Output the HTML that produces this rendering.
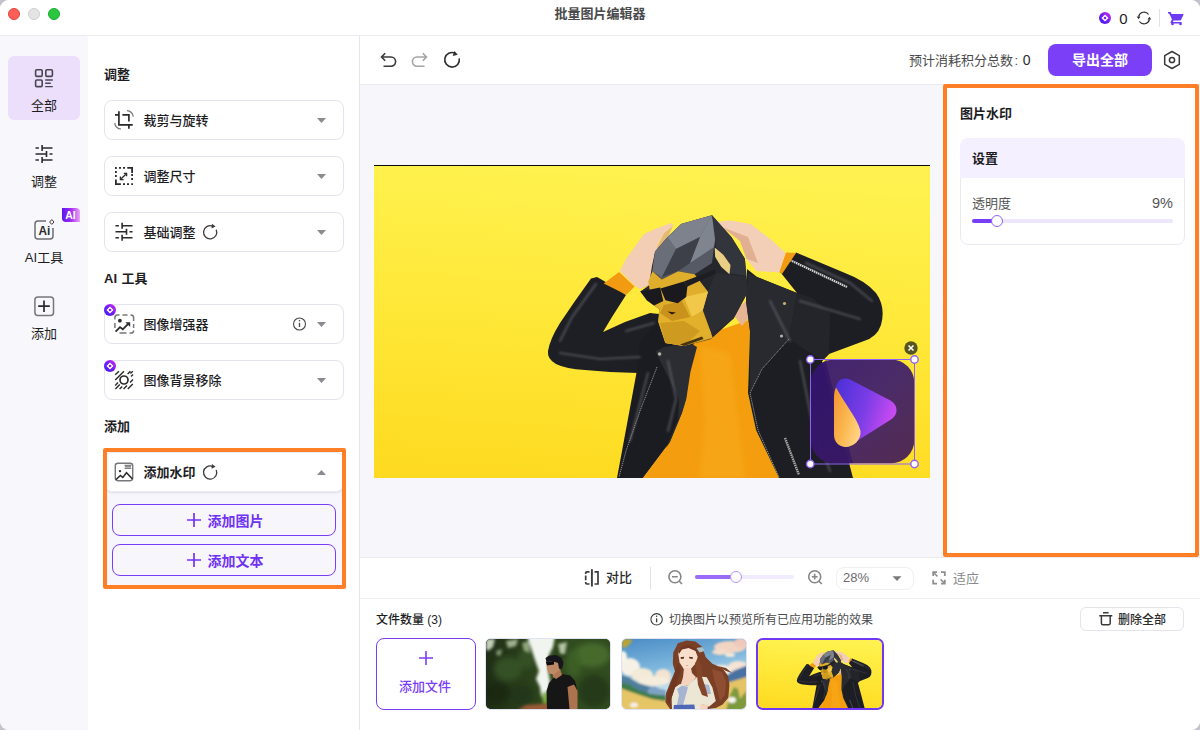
<!DOCTYPE html>
<html lang="zh-CN">
<head>
<meta charset="utf-8">
<title>批量图片编辑器</title>
<style>
*{box-sizing:border-box;margin:0;padding:0}
html,body{width:1200px;height:730px;overflow:hidden;background:#c4c3cb}
body{font-family:"Liberation Sans","Noto Sans CJK SC",sans-serif;color:#1d1d1f;font-size:13px;position:relative}
.abs{position:absolute}
#win{position:absolute;left:0;top:0;width:1200px;height:730px;background:#fff;border-radius:9px;overflow:hidden}
#titlebar{position:absolute;left:0;top:0;width:1200px;height:36px;background:#fff;border-bottom:1px solid #ebebef}
.tl{position:absolute;top:8px;width:12px;height:12px;border-radius:50%}
#title{position:absolute;left:0;width:1200px;top:5px;text-align:center;font-size:13px;font-weight:700;color:#4a4a4c;line-height:18px;letter-spacing:0}
#nav{position:absolute;left:0;top:36px;width:88px;height:694px;background:#f8f8fc;border-radius:0 3px 0 0}
.navitem{position:absolute;left:8px;width:72px;height:64px;border-radius:6px;text-align:center}
.navitem .lbl{position:absolute;left:0;width:72px;top:40.6px;font-size:13px;line-height:18px;color:#1d1d1f}
.navitem svg{position:absolute;left:24px;top:9px}
#panel{position:absolute;left:88px;top:36px;width:272px;height:694px;background:#fff;border-right:1px solid #e6e6ec}
.sec{position:absolute;left:16px;font-size:13px;font-weight:700;line-height:18px;color:#1d1d1f}
.card{position:absolute;left:16px;width:240px;height:40px;border:1px solid #e4e4ee;border-radius:8px;background:#fff}
.card .t{position:absolute;left:38.5px;top:10.8px;font-size:13px;line-height:18px;font-weight:500;color:#1d1d1f}
.card .ic{position:absolute;left:9px;top:9px}
.card .arr{position:absolute;left:213px;top:17px;width:0;height:0;border-left:4.5px solid transparent;border-right:4.5px solid transparent;border-top:5px solid #8a8a90}
#toolbar{position:absolute;left:360px;top:36px;width:840px;height:49px;background:#fff;border-bottom:1px solid #e9e9ef}
#canvas{position:absolute;left:360px;top:85px;width:840px;height:473px;background:#f7f6fb}
#zoombar{position:absolute;left:360px;top:557px;width:840px;height:42px;background:#fff;border-top:1px solid #e9e9ef;border-bottom:1px solid #ececf1}
#strip{position:absolute;left:360px;top:599px;width:840px;height:131px;background:#fff}

.g{stroke:#2b2b2d;fill:none;stroke-width:1.5}
.badge{position:absolute;left:-1px;top:-1px;width:12px;height:12px}
.btn{position:absolute;left:24px;width:224px;height:32px;border:1px solid #7a3df7;border-radius:8px;background:#f8f6fd;color:#6f33f3;font-size:14px;font-weight:700;line-height:20px}
.btn span{position:absolute;left:94.5px;top:6px;white-space:nowrap}
.btn svg{position:absolute;left:74px;top:8px}
.thumb{position:absolute;top:39px;width:126px;height:71px;border-radius:6px;overflow:hidden;border:1px solid #e2e2f2;background:#ccc}
.thumb svg{position:absolute;left:0;top:0;width:100%;height:100%;display:block}
</style>
</head>
<body>
<div id="win">
<!--PHOTO--><svg class="abs" style="left:0;top:0" width="0" height="0"><defs>
<linearGradient id="pbg" x1=".56" y1="0" x2=".44" y2="1"><stop offset="0" stop-color="#fff250"/><stop offset=".45" stop-color="#ffe93a"/><stop offset="1" stop-color="#fedb22"/></linearGradient>
<linearGradient id="lea" x1="0" y1="0" x2="1" y2="1"><stop offset="0" stop-color="#34363c"/><stop offset="1" stop-color="#15161a"/></linearGradient>
<filter id="bl1"><feGaussianBlur stdDeviation="1.2"/></filter>
<filter id="bl2"><feGaussianBlur stdDeviation="2.5"/></filter>
<symbol id="ph" viewBox="374 165 556 312" preserveAspectRatio="xMidYMid slice">
<rect x="374" y="165" width="556" height="312" fill="url(#pbg)"/>
<!-- left sleeve -->
<path d="M591 277.500L597 276L604 280L626 294L612 316L603 331L625 321L650 312L668 314L662 372L638 372L610 371L585 369Q566 368 556 363Q547 358 548 350Q550 338 560 322L575 300Z" fill="#1e1f24"/>
<!-- left body -->
<path d="M640 340L665 312L700 338L697 346L690 371L686 398L682 412L670 441L643 477L617 477L637 369Z" fill="#1b1c21"/>
<!-- sweater -->
<path d="M694 338L752 318L750 330L748 392L756 429L779 477L643 477L670 441L682 412L686 398L690 371Z" fill="#f49d0e"/>
<path d="M700 345L730 352L738 420L745 477L700 477L705 420Z" fill="#f8ab1c" opacity=".6" filter="url(#bl2)"/>
<!-- neck -->
<path d="M732 312L753 294L755 310L742 325Z" fill="#e6b592"/>
<!-- right jacket -->
<path d="M747 268L757 276L797 292L781 272L796 251.500L845 272Q866 280 876 292Q886 306 881 324Q877 336 864 340L829 353L822 360L838 420L853 477L779 477L756 429L748 392L750 330L746 300Z" fill="#1d1e23"/>
<!-- lapels -->
<path d="M655.5 350.600L664 346L690 342L697 346L690.4 371L686.3 398L682 412L670 441L660 456L666 447L678 418.400L679 398Z" fill="#2c2d33"/>
<path d="M748 272L757 276L797 292L789 338L762 368L750 392L750 330L746 300Z" fill="#292a30"/>
<path d="M797 292L812 297L830 312L829 353L822 360L800 345L789 338Z" fill="#24252b"/>
<path d="M640 288L650 282L652 270L657 246L664 232L673 225L668 236L661 250L658 266L656 282Z" fill="#d9a788" opacity=".75"/>
<!-- leather highlights -->
<g filter="url(#bl1)" opacity=".55" fill="none" stroke="#6d7078" stroke-width="2.2" stroke-linecap="round">
<path d="M596 283L572 316L560 340"/><path d="M560 352L600 358L640 356"/><path d="M626 330L654 322"/>
<path d="M648 372L630 440"/><path d="M668 360L676 398L668 430"/>
<path d="M806 262L850 282L872 300"/><path d="M800 300L860 318"/><path d="M770 300L790 340"/><path d="M800 360L812 420L830 470"/>
</g>
<!-- zippers -->
<g fill="none" stroke="#a5a5a0" stroke-width="1" stroke-dasharray="1.2 .8" opacity=".85"><path d="M657 366L640 410L626 450L619 476"/><path d="M789 338L762 368L750 392L758 429L779 476"/></g>
<path d="M785 437L799 474" stroke="#a9a9a6" stroke-width="2.4" stroke-dasharray="1.5 .7"/>
<path d="M790 259L847 286" stroke="#d4d4d4" stroke-width="2.2" stroke-dasharray="1.6 .6"/>
<circle cx="659.6" cy="353" r="1.8" fill="#b5b0a8"/><circle cx="781.5" cy="335" r="1.6" fill="#b5b0a8"/><circle cx="784.5" cy="302.5" r="1.6" fill="#c9b07a"/>
<!-- cuffs -->
<path d="M603.7 282.400L619.1 271.100L634.6 285.500L626.3 293.700Z" fill="#f29a12"/>
<path d="M779 271L786 251.500L796 252L782 273Z" fill="#f29a12"/>
<!-- hands -->
<path d="M620 270L626 258L636 244L644 233L655 228L666 224L672 222L673 225L664 232L657 245L660 262L652 282L640 288L635 285Z" fill="#f3cdb4"/>
<path d="M716 221L730 219.500L750.6 223L769 237L785.5 251.700L779.3 271.200L756.7 270.200L746.4 257.800L740 240L725 228Z" fill="#f4cfb7"/>
<path d="M722 226L748 236L758 262L746.4 257.800L740 240Z" fill="#d9a282" opacity=".7"/>
<!-- mask: black base -->
<path d="M712 214.300L723.3 227L731.6 236.200L744.9 257.800L748 290.700L733.6 317.400L711 338L683.9 345.100L665.4 342L658.2 320.400L659.2 308.100L652 303L640.3 290.600L648.9 284.500L652 264.900L655.1 250.600L667.4 236.200L681.2 222.900Z" fill="#26272c"/>
<!-- grey top -->
<path d="M655.1 250.600L667.4 236.200L681.2 222.900L712 214.300L716 232L714 246L712 262L694.6 273.200L678.1 270.200L661.7 278.400L652.4 270.200Z" fill="#565a64"/>
<path d="M667.4 236.200L681.2 222.900L712 214.300L700 236L676 248Z" fill="#7d828c"/>
<path d="M655.1 250.600L667.4 236.200L676 248L662 276L652.4 270.200Z" fill="#6a6e78"/>
<path d="M700 236L712 214.300L716 232L714 246L690 262Z" fill="#8a8f99" opacity=".8"/>
<path d="M676 248L700 236L690 262L678.1 270.200L662 276Z" fill="#3d4048"/>
<!-- right dark facets -->
<path d="M712 214.300L723.3 227L731.6 236.200L744.9 257.800L746 275L730 272L716 246Z" fill="#33353c"/>
<path d="M708 290.700L716 272L746 276L748 290.700L733.6 317.400L711 334L702.8 309.200Z" fill="#2c2d33"/>
<!-- ear -->
<path d="M714.7 246.500L723.3 253.700L730.5 264L729.5 273.200L721.3 266L715.1 255.800Z" fill="#e9cf86"/>
<!-- yellow face -->
<path d="M648.3 280.400L652.4 270.200L661.7 278.400L678.1 270.200L694.6 273.200L708 290.700L702.8 309.200L711 331.800L712.7 336.900L683.9 345.100L665.4 342L658.2 320.400L659.2 308.100L652 303Z" fill="#dfae2c"/>
<path d="M684 296L708 290.700L702.8 309.200L692 316Z" fill="#f1c84a"/>
<path d="M660 310L690 316L702 312L711 332L684 345L665.4 342L658.2 320.400Z" fill="#e3b02c"/>
<path d="M660 322L684 320L700 330L684 345L665.4 342Z" fill="#cf9a20"/>
<path d="M664 304L682 300L690 316L672 320L660 312Z" fill="#c8921c"/>
<path d="M680 343.500L702 335.500L703.5 338L684 345.100Z" fill="#2e2009" opacity=".85"/>
<!-- glasses -->
<path d="M640.3 290.600L660.2 286.500L663.3 299.900L654.1 304.600L646.9 299.500Z" fill="#1a1a1e"/>
<path d="M660.5 287.600L683.9 280.600L687.4 285.500L686.2 296L677.7 302.200L665.4 299.200Z" fill="#1a1a1e"/>
<path d="M683.9 280.600L715.1 268.600L716.1 272.200L687 285.800Z" fill="#1d1d22"/>
<path d="M667.5 310.500L676 311.500L672 313.500Z" fill="#2a1c08"/>
</symbol>
</defs></svg>
<!--/PHOTO-->
<div id="titlebar">
  <div class="tl" style="left:8px;background:#fe5f57;border:.5px solid #e2443d"></div>
  <div class="tl" style="left:28px;background:#e4e4e4;border:.5px solid #cfcfcf"></div>
  <div class="tl" style="left:48px;background:#29c740;border:.5px solid #1eab32"></div>
  <div id="title">批量图片编辑器</div>
  <div class="abs" style="left:1119.3px;top:9.5px;font-size:15px;line-height:18px;color:#1d1d1f">0</div>
</div>
<div id="nav">
  <div class="navitem" style="top:20px;background:#ecdffc"><div class="lbl">全部</div></div>
  <div class="navitem" style="top:96px"><div class="lbl">调整</div></div>
  <div class="navitem" style="top:172px"><div class="lbl">AI工具</div></div>
  <div class="navitem" style="top:248px"><div class="lbl">添加</div></div>
</div>
<div id="panel">
  <div class="sec" style="top:30px">调整</div>
  <div class="card" style="top:64px"><div class="t">裁剪与旋转</div></div>
  <div class="card" style="top:120px"><div class="t">调整尺寸</div></div>
  <div class="card" style="top:176px"><div class="t">基础调整</div></div>
  <div class="sec" style="top:233.5px;word-spacing:1px">AI 工具</div>
  <div class="card" style="top:268px"><div class="t">图像增强器</div></div>
  <div class="card" style="top:324px"><div class="t">图像背景移除</div></div>
  <div class="sec" style="top:382px">添加</div>

  <div class="abs" style="left:16px;top:416px;width:240px;height:136px;border-radius:8px;background:#f7f6fc"></div>
  <div class="card" style="top:416px;box-shadow:0 1px 2px rgba(60,50,120,.12);border-color:#ececf4"><div class="t" style="font-weight:700">添加水印</div></div>
  <div class="btn" style="top:468px"><svg width="14" height="14" viewBox="0 0 14 14"><path d="M0 7h14M7 0v14" stroke="#6f33f3" stroke-width="1.7"/></svg><span>添加图片</span></div>
  <div class="btn" style="top:508px"><svg width="14" height="14" viewBox="0 0 14 14"><path d="M0 7h14M7 0v14" stroke="#6f33f3" stroke-width="1.7"/></svg><span>添加文本</span></div>
  <div class="abs" style="left:15px;top:412px;width:243px;height:141px;border:4px solid #ff7f27;border-radius:2px"></div>
</div>
<div id="toolbar">
  <div class="abs" style="left:549px;top:15px;font-size:13px;line-height:18px;color:#4a4a4c;white-space:nowrap">预计消耗积分总数<span style="margin-left:1.5px">:</span><span style="margin-left:4.5px;color:#2b2b2d;font-size:14px">0</span></div>
  <div class="abs" style="left:688px;top:8px;width:104px;height:32px;border-radius:8px;background:#7a3ff7;color:#fff;font-size:14px;font-weight:700;line-height:32px;text-align:center">导出全部</div>
</div>
<div id="canvas">
  <div class="abs" style="left:14px;top:79.5px;width:556px;height:1.5px;background:#0a0a0a"></div>
  <div id="photo" class="abs" style="left:14px;top:81px;width:556px;height:311.5px;background:#fde53a;overflow:hidden"><svg class="abs" style="left:0;top:0" width="556" height="312"><use href="#ph" width="556" height="312"/></svg></div>
  <svg id="wm" class="abs" style="left:430px;top:250px;pointer-events:none" width="140" height="140" viewBox="790 335 140 140">
<defs>
<linearGradient id="wmb" x1="0" y1="0" x2="1" y2="1"><stop offset="0" stop-color="#3a1a72"/><stop offset=".5" stop-color="#44246a"/><stop offset="1" stop-color="#4c2452"/></linearGradient>
<linearGradient id="wmp" x1="0" y1="0" x2="1" y2=".35"><stop offset="0" stop-color="#4a2fd6"/><stop offset=".55" stop-color="#7a3de6"/><stop offset="1" stop-color="#c84af0"/></linearGradient>
<linearGradient id="wmo" x1="0" y1=".2" x2="1" y2=".8"><stop offset="0" stop-color="#f59a35"/><stop offset=".5" stop-color="#fbb850"/><stop offset="1" stop-color="#ffd68a"/></linearGradient>
</defs>
<rect x="811" y="359.6" width="103.3" height="103.6" rx="23" fill="url(#wmb)" opacity=".96"/>
<path d="M811 382a22.4 22.4 0 0 1 22.4-22.400L825 359.600L853 463.200L833.4 463.200a22.4 22.4 0 0 1-22.4-22.400Z" fill="#2c0f66" opacity=".55"/>
<path d="M836 387.500C837 380 843.5 376.8 850 379.500L890.5 400.500C898.5 405 898.5 415 891 419.500L853 443.500C848 446.5 847 447.2 843 446.800C846 440 848 420 836 387.500Z" fill="url(#wmp)"/>
<path d="M836 387.500C849 410 858 420 860.5 431C861.5 441 852 447.5 845 447C838.5 446.5 834 441.5 834 435L834 398C834 393 834.8 390 836 387.500Z" fill="url(#wmo)"/>
<rect x="810.5" y="359.5" width="104" height="104.5" fill="none" stroke="#8e62f6" stroke-width="1"/>
<g fill="#fff" stroke="#8e62f6" stroke-width="1.4"><circle cx="810.3" cy="359.5" r="3.7"/><circle cx="914.5" cy="359.5" r="3.7"/><circle cx="810.3" cy="464" r="3.7"/><circle cx="914.5" cy="464" r="3.7"/></g>
<circle cx="911" cy="348" r="6.7" fill="#57551f"/><path d="M908.5 345.500l5 5M913.5 345.500l-5 5" stroke="#fff" stroke-width="1.5"/>
</svg>
  <div id="rp" class="abs" style="left:587px;top:3px;width:248px;height:466px;background:#fff">
    <div class="abs" style="left:13px;top:16.5px;font-size:13px;font-weight:700;line-height:18px">图片水印</div>
    <div class="abs" style="left:13px;top:50px;width:225px;height:107px">
      <div class="abs" style="left:0;top:39px;width:225px;height:68px;border:1px solid #e9e9f1;border-radius:0 0 8px 8px;background:#fff"></div>
      <div class="abs" style="left:0;top:0;width:225px;height:40px;background:#f5f0ff;border-radius:8px 8px 0 0"></div>
      <div class="abs" style="left:12px;top:12px;font-size:13px;font-weight:700;line-height:18px">设置</div>
      <div class="abs" style="left:12px;top:56.5px;font-size:13px;line-height:18px;color:#555558">透明度</div>
      <div class="abs" style="right:12px;top:56px;font-size:14.5px;line-height:18px;color:#555558">9%</div>
      <div class="abs" style="left:12px;top:81px;width:201px;height:4px;border-radius:2px;background:#ede6fd"></div>
      <div class="abs" style="left:12px;top:81px;width:24px;height:4px;border-radius:2px;background:#7a3df7"></div>
      <div class="abs" style="left:30.5px;top:77px;width:12px;height:12px;border-radius:50%;background:#fff;border:1.5px solid #8e62f6"></div>
    </div>
  </div>
  <div class="abs" style="left:583px;top:-1px;width:255.5px;height:473px;border:4px solid #ff7f27;border-radius:2px"></div>
</div>
<div id="zoombar">
  <div class="abs" style="left:246px;top:11px;font-size:13px;font-weight:500;line-height:18px;color:#2b2b2d">对比</div>
  <div class="abs" style="left:334.5px;top:16.7px;width:99px;height:4.4px;border-radius:2.2px;background:#f0ebfe"></div>
  <div class="abs" style="left:334.5px;top:16.7px;width:40px;height:4.4px;border-radius:2.2px;background:#9a6cf8"></div>
  <div class="abs" style="left:369.5px;top:12.9px;width:12px;height:12px;border-radius:50%;background:#fff;border:1.5px solid #b095fa"></div>
  <div class="abs" style="left:476px;top:8.5px;width:78px;height:23px;border-radius:8px;border:1px solid #efeff4;background:#fff"></div>
  <div class="abs" style="left:483px;top:11px;font-size:13px;line-height:18px;color:#6a6a6e">28%</div>
  <div class="abs" style="left:593px;top:12px;font-size:13px;line-height:18px;color:#8a8a8e">适应</div>
</div>
<div id="strip">
  <div class="abs" style="left:16px;top:12px;font-size:12px;font-weight:500;line-height:18px;color:#1d1d1f;white-space:nowrap">文件数量 (3)</div>
  <div class="abs" style="left:309px;top:12px;font-size:12px;line-height:18px;color:#4a4a4c;white-space:nowrap">切换图片以预览所有已应用功能的效果</div>
  <div class="abs" style="left:720px;top:8px;width:104px;height:24px;border:1px solid #e4e4ea;border-radius:6px;background:#fff"></div>
  <div class="abs" style="left:758px;top:11.5px;font-size:12px;font-weight:500;line-height:18px;color:#2b2b2d;white-space:nowrap">删除全部</div>
  <div class="abs" style="left:16px;top:39px;width:100px;height:72px;border:1px solid #7a3df7;border-radius:8px;background:#fff">
    <svg class="abs" style="left:42px;top:12px" width="14" height="14" viewBox="0 0 14 14"><path d="M0 7h14M7 0v14" stroke="#7a3df7" stroke-width="1.6"/></svg>
    <div class="abs" style="left:-1px;top:39px;width:98px;text-align:center;font-size:13px;font-weight:500;line-height:18px;color:#7a3df7">添加文件</div>
  </div>
  <div class="thumb" id="t1" style="left:125px;height:72px"><svg viewBox="0 0 124 70" preserveAspectRatio="none">
<defs><filter id="f1"><feGaussianBlur stdDeviation="1.5"/></filter><filter id="f1b"><feGaussianBlur stdDeviation=".5"/></filter><filter id="f1c"><feGaussianBlur stdDeviation="2.6"/></filter>
<linearGradient id="t1l" x1="0" y1="0" x2="1" y2="0"><stop offset="0" stop-color="#1f2e17"/><stop offset="1" stop-color="#2e461d"/></linearGradient></defs>
<rect width="124" height="70" fill="#2e471d"/>
<rect width="56" height="70" fill="url(#t1l)"/>
<rect x="62" width="62" height="70" fill="#314c20"/>
<g filter="url(#f1c)">
<ellipse cx="22" cy="30" rx="14" ry="12" fill="#3a5627" opacity=".8"/><ellipse cx="40" cy="20" rx="8" ry="10" fill="#385424" opacity=".8"/>
<ellipse cx="10" cy="54" rx="14" ry="12" fill="#1a2712" opacity=".8"/><ellipse cx="36" cy="56" rx="12" ry="10" fill="#223618" opacity=".8"/>
<ellipse cx="106" cy="16" rx="18" ry="12" fill="#4b7030" opacity=".85"/><ellipse cx="88" cy="24" rx="8" ry="14" fill="#3d6127" opacity=".8"/>
<ellipse cx="108" cy="52" rx="16" ry="16" fill="#223819" opacity=".9"/><ellipse cx="75" cy="12" rx="5" ry="10" fill="#263a19"/>
</g>
<g filter="url(#f1)">
<path d="M41 -3L69 -3L67 8L63 16L62 30L64 42L63 56L58 62L55 56L54 48L50 40L53 32L50 24L46 12Z" fill="#f1f5ef"/>
<path d="M0 0L9 0L7 8L2 12L0 10Z" fill="#c5d0ba"/><path d="M20 2L32 0L30 7L22 9Z" fill="#9fb090"/><path d="M10 12L16 10L15 16L11 17Z" fill="#7f9670"/><path d="M72 5L81 3L79 15L74 15Z" fill="#b3c4a2"/><path d="M36 4L43 2L44 14L38 12Z" fill="#8fa57c"/>
<path d="M56 54L62 52L62 64L57 64Z" fill="#7fae3e"/>
<path d="M30 72L40 66L63 64.500L63 72Z" fill="#9a5a34"/>
</g>
<g filter="url(#f1b)">
<path d="M61 70L60.5 52L63 44L68 38.500L76 35L84 36.500L89 42L91 50L91 70Z" fill="#141416"/>
<path d="M66 32L74 30L76 36L70 40L67 38Z" fill="#b07a56"/>
<path d="M60.5 24L66 21L73 23L73.5 31L68 35.500L63 34.500L61 30Z" fill="#c08a66"/>
<path d="M59.5 19L63 16.500L70 16L75.5 19L77.5 24L76 30L73 29.500L72 24L66 22L60.5 23Z" fill="#19191b"/>
<path d="M59.8 22.800L68 22L68 25.600L61 26.500Z" fill="#0e0e10"/>
<path d="M81.5 48L88 45.500L91.5 52L91.5 70L83.5 70Z" fill="#ad7350"/>
</g>
</svg></div>
  <div class="thumb" id="t2" style="left:261px;height:72px"><svg viewBox="0 0 124 70" preserveAspectRatio="none">
<defs><filter id="f2"><feGaussianBlur stdDeviation="1.1"/></filter><filter id="f2b"><feGaussianBlur stdDeviation=".45"/></filter>
<linearGradient id="t2s" x1="0" y1="0" x2=".3" y2="1"><stop offset="0" stop-color="#4a8cc6"/><stop offset=".45" stop-color="#7db6dc"/><stop offset=".75" stop-color="#c2e0ee"/></linearGradient></defs>
<rect width="124" height="70" fill="url(#t2s)"/>
<g filter="url(#f2)">
<ellipse cx="8" cy="28" rx="10" ry="9" fill="#f6f1e6"/><ellipse cx="20" cy="36" rx="11" ry="7" fill="#f3ead8"/><ellipse cx="41" cy="37" rx="8" ry="7" fill="#f3e3d2"/><ellipse cx="32" cy="42" rx="16" ry="5" fill="#f5ecdc"/><ellipse cx="1" cy="18" rx="4" ry="6" fill="#f8f4ea"/>
<ellipse cx="108" cy="8" rx="16" ry="6" fill="#f2d4c2"/><ellipse cx="98" cy="13" rx="8" ry="3" fill="#f3dccb"/><ellipse cx="120" cy="4" rx="8" ry="5" fill="#f1c9ba"/>
<ellipse cx="116" cy="28" rx="10" ry="6" fill="#f5e3d4"/><ellipse cx="100" cy="31" rx="9" ry="5" fill="#f6ece0"/><ellipse cx="108" cy="16" rx="5" ry="2" fill="#f6ead9"/>
<path d="M-2 36L6 38L16 44L26 47L34 49L44 52L44 58L-2 58Z" fill="#4f7f9b"/>
<path d="M26 50L32 47L38 50L44 51L44 56L26 56Z" fill="#7fa3c4"/>
<path d="M-2 44L6 45L16 51L28 55L44 57L44 66L-2 66Z" fill="#3f7d48"/>
<path d="M100 40L112 31.500L126 26L126 40L106 45Z" fill="#4a72a2"/>
<path d="M-2 49L12 54L30 60L50 63L50 72L-2 72Z" fill="#e6c566"/>
<path d="M96 48L108 43L126 37.500L126 72L92 72Z" fill="#e4c465"/>
<path d="M104 72L108 56L112 48L116 50L118 60L124 52L126 72Z" fill="#7d9a3e"/>
<ellipse cx="110" cy="61" rx="4" ry="3" fill="#f8f6ee"/><ellipse cx="12" cy="66" rx="4" ry="2.5" fill="#f4efe4"/>
<path d="M0 0L10 0L9 4L3 9L0 8Z" fill="#b7a437"/>
</g>
<g filter="url(#f2b)">
<path d="M55.9 4.300L64.4 1.500L73.4 2.600L80.2 7.700L83.6 17.900L90.4 24.700L100.6 29.200L106.3 37.200L107.4 46.200L106.3 58.700L100.6 65.500L93.8 68.900L86 70L48 70L43.4 63.200L44 54.200L48.5 42.800L53 32.600L50.8 24.700L51.3 13.400Z" fill="#7a3f27"/>
<path d="M96 27L104 29L110 34L104 32Z" fill="#7a3f27"/>
<path d="M90 30L100 33L104 42L103 56L98 62L95 50L92 40Z" fill="#8f4e30"/>
<path d="M55.9 12.200L59.8 8.800L66.6 7.700L73.4 11.100L75.7 17.900L73.4 24.700L67.8 30.900L62.1 30.400L57.6 23.600Z" fill="#f8dfcc"/>
<path d="M62 29L69 29L70 34L74 38.300L68 47L58.7 46L61 38.300Z" fill="#f4d4c0"/>
<path d="M53 48.500L58 45L66 47L75.7 37.200L84.8 38.300L90.4 48.500L93.8 62.100L87 67.800L80 65L79 70L50 70L49.6 58.700Z" fill="#ece6d4"/>
<path d="M55 50L60 46.500L66 48L65 52L61 66L55 66L57 56Z" fill="#8fa3d2" opacity=".75"/>
<path d="M78 44L87 46L89 55L80 55Z" fill="#8fa3d2" opacity=".7"/>
<path d="M51.9 66.100L72.3 65.600L73 70L51.5 70Z" fill="#4f67b5"/>
<path d="M78.5 64.400L86 66.500L85.5 70L78 70Z" fill="#f4d4c0"/>
<path d="M73 24L76.5 20L80 28L80 38L84 50L86 58L80 56L76 46L75 36Z" fill="#84452b"/>
<path d="M53 32.600L56.5 24L58.5 32L56 40L53 48.500L49.6 58.700L47.4 65.500L44.5 60L48.5 46Z" fill="#6f3822"/>
<path d="M55.9 12.200L59.8 7.500L67 6L74 9.500L76 17L73.5 12L66.6 9L60 10.500L57 15Z" fill="#6f3822"/>
<path d="M74.5 9L80.5 8L82.5 12L77.5 13.500Z" fill="#a9c0c6"/>
<path d="M58.5 18.300L62 17.800L62 19.600L59 20Z" fill="#5a2a1a"/><path d="M67 17.800L71 18.300L70.5 20L67.5 19.600Z" fill="#5a2a1a"/>
<path d="M63.5 26L66.5 26L65 27.200Z" fill="#e59a90"/>
</g>
</svg></div>
  <div class="thumb" id="t3" style="left:396px;top:39px;width:128px;height:72px;border:2px solid #7038f5;border-radius:7px"><svg viewBox="0 0 124 68" preserveAspectRatio="none"><use href="#ph" width="124" height="68"/></svg></div>
</div>

<svg id="icons" class="abs" style="left:0;top:0;pointer-events:none" width="1200" height="730" viewBox="0 0 1200 730" fill="none">
<defs>
<linearGradient id="gb" x1="0" y1="1" x2="1" y2="0"><stop offset="0" stop-color="#3a1df5"/><stop offset=".45" stop-color="#6a1df2"/><stop offset="1" stop-color="#d52af0"/></linearGradient>
<linearGradient id="gai" x1="0" y1="0" x2="1" y2="0"><stop offset="0" stop-color="#5a18ee"/><stop offset=".5" stop-color="#a42af5"/><stop offset="1" stop-color="#eaa6f6"/></linearGradient>
<g id="coin"><circle r="6" fill="url(#gb)"/><path d="M0-3.6L3.6 0L0 3.6L-3.6 0Z" fill="#fff"/><circle r="1.3" fill="#7a22f2"/></g>
<g id="sliders" stroke="#2b2b2d" stroke-width="1.6"><path d="M0 3h3.4M6.6 3h10.4M6.6 0v6M0 9h11M14 9h3M11 6v6M0 15h3.4M6.6 15h10.4M6.6 12v6"/></g>
<g id="refresh" stroke="#3a3a3c" stroke-width="1.3"><path d="M6.2-2.6A6.6 6.6 0 1 1 2.6-6.1"/><path d="M1.6-8.3L5.6-6.1L1.9-3.6Z" fill="#3a3a3c" stroke="none" transform="rotate(8 3 -6)"/></g>
<g id="arrdn"><path d="M0 0h9l-4.5 5z" fill="#8a8a90"/></g>
</defs>
<!-- nav: all -->
<g stroke="#4a4650" stroke-width="1.6"><rect x="35.6" y="69.8" width="6.6" height="6.6" rx="1.2"/><rect x="45.8" y="69.8" width="6.6" height="6.6" rx="1.2"/><rect x="35.6" y="80" width="6.6" height="6.6" rx="1.2"/><path d="M45.2 80h7.6M45.2 83.3h5.6M45.2 86.6h7.6" stroke-width="1.4"/></g>
<!-- nav: sliders -->
<use href="#sliders" x="35.5" y="145"/>
<!-- nav: AI -->
<path d="M46 221H38a3 3 0 0 0-3 3v12a3 3 0 0 0 3 3h12a3 3 0 0 0 3-3V228" stroke="#6e6e72" stroke-width="1.5"/>
<path d="M51.8 219.6l2.2 2.4l-2.2 2.4l-2.2-2.4z" stroke="#3a3a3c" stroke-width="1"/>
<text x="38.6" y="235" font-family="Liberation Sans,sans-serif" font-weight="700" font-size="12.5" fill="#2b2b2d" textLength="11.8" lengthAdjust="spacingAndGlyphs">Ai</text>
<!-- AI badge -->
<path d="M62 208h14a4 4 0 0 1 4 4v10H66a4 4 0 0 1-4-4z" fill="url(#gai)"/>
<text x="65.2" y="219" font-family="Liberation Sans,sans-serif" font-weight="700" font-size="10.5" fill="#fff">AI</text>
<!-- nav: add -->
<rect x="34.9" y="296.9" width="18.6" height="18.6" rx="3" stroke="#77777b" stroke-width="1.5"/>
<path d="M38.2 306.2h11.6M44 300.4v11.6" stroke="#2b2b2d" stroke-width="1.7"/>
<!-- crop -->
<g stroke="#2b2b2d" stroke-width="1.7"><path d="M118.9 111.2v13.7h13.9M115 114.9h3.9M122.4 114.9h6.5v6.7M128.9 124.9v3.9"/></g>
<g stroke="#77777b" stroke-width="1.2"><path d="M127 110.6a6.4 6.4 0 0 1 6.2 6.2M114.8 123a6.2 6.2 0 0 0 6.2 6"/></g>
<!-- resize -->
<g stroke="#2b2b2d" stroke-width="1.8"><path d="M115.9 167v2M115.9 171v2M115.9 175v2M119 167.9h2M123 167.9h2M132.1 174v2M132.1 178v2M123 184.1h2M127 184.1h2M131.2 184.1h1.8" stroke-width="1.8"/><path d="M127.3 167.9h4.8v5M115.9 179.6v4.5h5"/><path d="M121.2 178.8l4.6-4.6" stroke-width="1.3"/><path d="M120.4 176.4v3.2h3.2M126.6 176.2v-2.8h-2.8" stroke-width="1.3"/></g>
<!-- basic adjust -->
<use href="#sliders" x="115.5" y="222.8"/>
<use href="#refresh" x="210" y="232.3"/>
<!-- enhancer -->
<g stroke="#77777b" stroke-width="1.5"><path d="M119.5 315h-2a2.6 2.6 0 0 0-2.6 2.600v2M122.5 315h5M130.5 315h0.500a2.6 2.6 0 0 1 2.6 2.600v3.400M133.6 324v4M133.6 330.500a2.6 2.6 0 0 1-2.6 2.600h-1.500M126.5 333.100h-7M114.9 323v5"/></g>
<circle cx="119.9" cy="320.7" r="1.9" fill="#2b2b2d"/>
<path d="M115.6 331.700l4.4-4.600l2.8 2.200l5.4-5.4" stroke="#2b2b2d" stroke-width="1.8"/>
<path d="M125.4 322.200h4.800v4.800z" fill="#2b2b2d"/>
<!-- bg removal -->
<g stroke="#2b2b2d" stroke-width="1.4"><path d="M115.2 374.800l3.8-3.600M115.2 380l8.8-8.800M115.2 385.400l2.8-2.800M115.4 389l4.4-4.400M119.6 389l2.6-2.600M123.6 389l3.4-3.400M127.8 389l5-5M130 382.400l3-3M131 376.400l2-2M127.6 374l2.8-2.800M132.8 371.200l-2.4 2.4"/></g>
<circle cx="124" cy="380" r="4" stroke="#2b2b2d" stroke-width="1.7"/>
<!-- watermark icon -->
<rect x="115.3" y="463.3" width="17.4" height="17.4" rx="2.6" stroke="#77777b" stroke-width="1.4"/>
<path d="M115.8 479.800l4.6-4.400l2.4 2l3.7-4.700l6 6.2" stroke="#2b2b2d" stroke-width="1.5"/>
<circle cx="120" cy="471.1" r="1.2" fill="#2b2b2d"/>
<path d="M124.5 465.300h6.800M124.5 468.300h6.800M125 466.800h6" stroke="#3a3a3c" stroke-width=".8"/>
<use href="#refresh" x="210" y="472.5"/>
<!-- coins -->
<use href="#coin" x="110" y="310"/>
<use href="#coin" x="110" y="366"/>
<use href="#coin" x="1105" y="18"/>
<!-- arrows -->
<use href="#arrdn" x="317" y="118"/><use href="#arrdn" x="317" y="174"/><use href="#arrdn" x="317" y="230"/><use href="#arrdn" x="317" y="322"/><use href="#arrdn" x="317" y="378"/>
<path d="M317 475h9l-4.5-5z" fill="#8a8a90"/>
<!-- info -->
<circle cx="299.5" cy="324" r="6" stroke="#4a4a4e" stroke-width="1.1"/><path d="M299.5 322.800v4.2" stroke="#4a4a4e" stroke-width="1.3"/><circle cx="299.5" cy="320.8" r=".8" fill="#4a4a4e"/>
<!-- undo/redo/refresh -->
<g stroke="#3a3a3c" stroke-width="1.6"><path d="M385.2 53.300l-3.7 3.700l3.7 3.700M381.7 57h9.300a4.6 4.6 0 0 1 0 9.200h-7.5"/></g>
<g stroke="#a4a4a6" stroke-width="1.6"><path d="M422.8 53.300l3.7 3.700l-3.7 3.700M426.3 57h-9.300a4.6 4.6 0 0 0 0 9.200h7.5"/></g>
<g stroke="#2f2f31" stroke-width="1.6"><path d="M459.2 58.300A7.3 7.3 0 1 1 455 53.1"/><path d="M453.8 51.200l4.2 2.800l-4.6 2.400z" fill="#2f2f31" stroke="none" transform="rotate(14 455 53.5)"/></g>
<!-- sync -->
<g stroke="#2f2f31" stroke-width="1.2"><path d="M1138.6 16.500a5.6 5.6 0 0 1 10-2M1149.4 19.500a5.6 5.6 0 0 1-10 2"/><path d="M1136.7 16.600h3.800l-1.9 2.600zM1151.3 19.400h-3.800l1.9-2.600z" fill="#2f2f31" stroke="none"/></g>
<path d="M1159.5 9v18" stroke="#e2e2e6" stroke-width="1"/>
<!-- cart -->
<path d="M1168 12h2.600l.9 2h11.300c.5 0 .8.5.6 1l-2.3 4.700c-.2.5-.7.8-1.3.8h-6.200l-.8 1.500h8.800v1.600h-9.600c-1.1 0-1.8-1.2-1.2-2.200l1.2-2.200l-2.9-5.600h-1.100z" fill="#6e3bf5"/><circle cx="1172.5" cy="24" r="1.3" fill="#6e3bf5"/><circle cx="1180.5" cy="24" r="1.3" fill="#6e3bf5"/>
<!-- settings hex -->
<path d="M1172 51.500l7.3 4.200v8.600l-7.3 4.200l-7.3-4.200v-8.600z" stroke="#3a3a3c" stroke-width="1.5" stroke-linejoin="round"/><circle cx="1172" cy="60" r="2.6" stroke="#3a3a3c" stroke-width="1.5"/>
<!-- compare -->
<g stroke="#3a3a3c" stroke-width="1.7"><path d="M591.9 569.2v17.3" stroke-width="1.9"/><path d="M594.5 571.8h3.500v12.200h-3.5"/><path d="M589.5 571.8h-2.600a1.2 1.2 0 0 0-1.2 1.200v.9M585.7 575.600v4.600M585.7 581.900v.9a1.2 1.2 0 0 0 1.2 1.200h2.6"/></g>
<path d="M650.5 566.500v23" stroke="#e2e2e6"/>
<!-- zoom out / in -->
<g stroke="#868688" stroke-width="1.6"><circle cx="674.9" cy="576.7" r="6"/><path d="M672 576.7h5.8M679.3 581.2l2.7 2.8"/><circle cx="814.7" cy="576.7" r="6"/><path d="M811.8 576.7h5.8M814.7 573.8v5.8M819.1 581.2l2.7 2.8"/></g>
<path d="M892.5 576.200h9l-4.5 4.800z" fill="#7a7a7e"/>
<!-- fit -->
<g stroke="#8e8e92" stroke-width="1.8"><path d="M933.2 576v-3.800h3.800M941 572.200h3.800v3.800M944.8 579.800v3.800h-3.800M937 583.600h-3.800v-3.8"/><path d="M933.8 572.800l3.6 3.600M944.2 583l-3.6-3.6" stroke-width="1.5"/></g>
<!-- info strip -->
<circle cx="656.6" cy="619.3" r="5.7" stroke="#3a3a3c" stroke-width="1.1"/><path d="M656.6 618.300v4" stroke="#3a3a3c" stroke-width="1.3"/><circle cx="656.6" cy="616.3" r=".8" fill="#3a3a3c"/>
<!-- trash -->
<g stroke="#3a3a3c" stroke-width="1.5"><path d="M1099.3 615.700h13M1103 612.800h5.600M1101.4 615.700v7.500a1.5 1.5 0 0 0 1.5 1.500h5.800a1.5 1.5 0 0 0 1.5-1.500v-7.5"/></g>
</svg>
</div>
</body>
</html>
